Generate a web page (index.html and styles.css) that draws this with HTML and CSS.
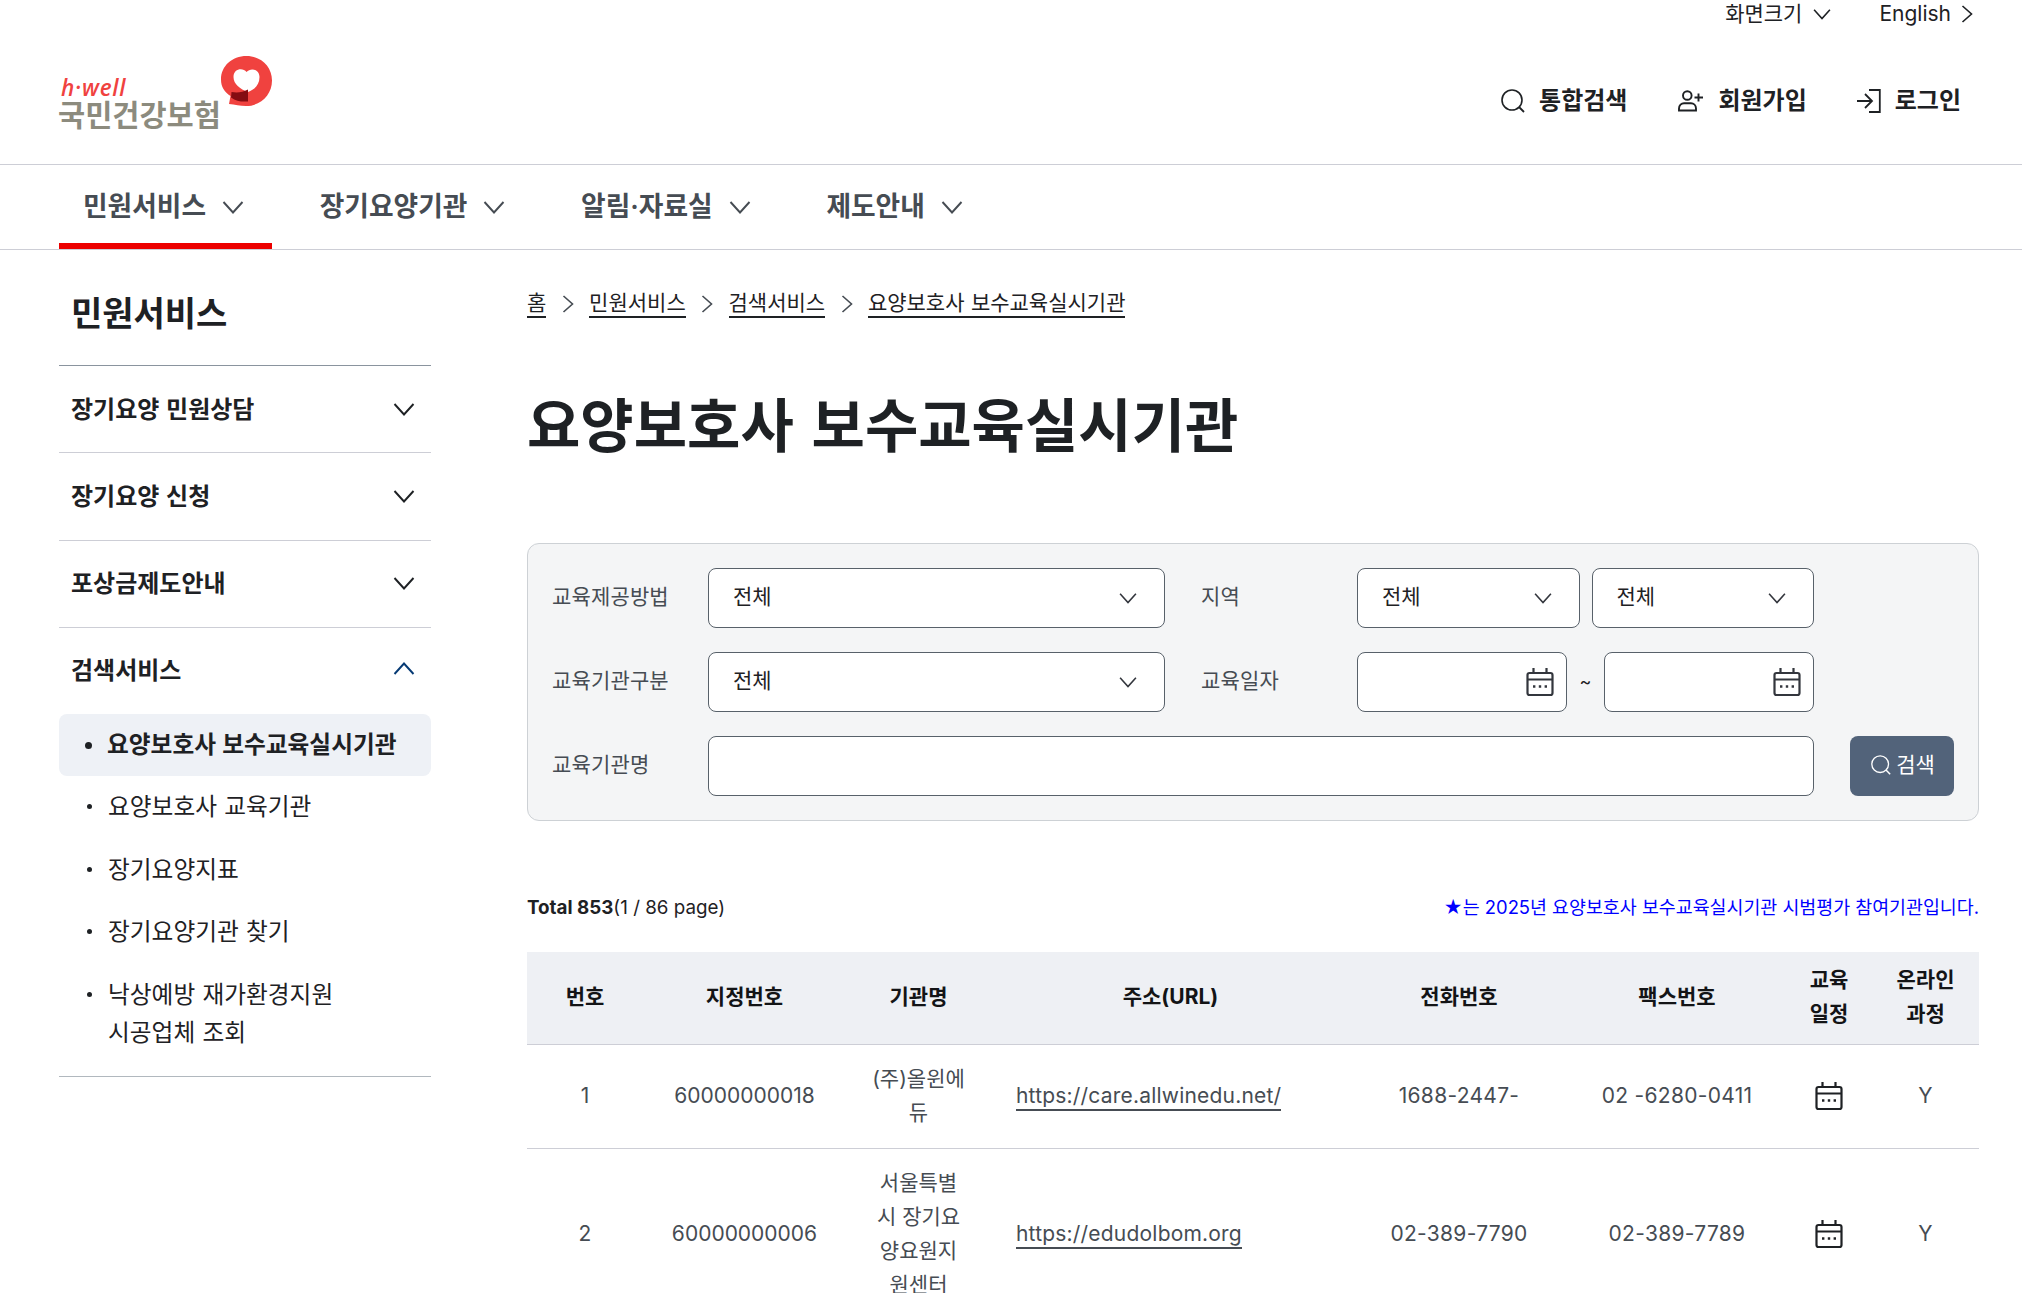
FILE: index.html
```html
<!DOCTYPE html>
<html lang="ko">
<head>
<meta charset="utf-8">
<title>요양보호사 보수교육실시기관</title>
<link rel="stylesheet" href="styles.css">
</head>
<body>
<svg width="0" height="0" class="defs" aria-hidden="true">
  <symbol id="chev" viewBox="0 0 24 24"><path d="M2.500 7 12 17.500l9.500-10.500" fill="none" stroke="currentColor" stroke-width="1.900"/></symbol>
  <symbol id="right" viewBox="0 0 12 18"><path d="M1.500 1 10.500 9l-9 8" fill="none" stroke="currentColor" stroke-width="1.600"/></symbol>
  <symbol id="search" viewBox="0 0 24 24"><circle cx="11" cy="11" r="10" fill="none" stroke="currentColor" stroke-width="1.600"/><path d="m18 18 5 5" stroke="currentColor" stroke-width="1.800"/></symbol>
  <symbol id="cal" viewBox="0 0 28 30"><g fill="none" stroke="currentColor" stroke-width="2.200"><rect x="1.500" y="6" width="25" height="22" rx="2"/><path d="M1.500 12.500h25M7.500 1v5M20.500 1v5"/></g><path d="M7 19.500h2.400M12.800 19.500h2.400M18.600 19.500h2.400" stroke="currentColor" stroke-width="2.400"/></symbol>
</svg>
<header class="header">
  <div class="util"><a>화면크기 <svg class="i-chev"><use href="#chev"/></svg></a><a>English <svg class="i-right"><use href="#right"/></svg></a></div>
  <div class="brand-row">
    <a class="logo">
      <span class="logo-text"><i>h·well</i><b>국민건강보험</b></span>
      <svg class="logo-mark" viewBox="0 0 51 51"><path fill="#f0423f" d="M25.500 0C40 0 51 10.500 51 24.500S40 50 25 50c-6 0-11-1.500-17-2l1.500-8C3.500 36 0 31 0 23.500 0 10 11 0 25.500 0z"/><path fill="#fff" d="M27 36C19 33 12.500 28 12.500 21c0-8.500 9.500-9.500 13-5 4-4.500 13-3 13 5 0 8-5 12.500-11.500 15z"/><path fill="#850c12" d="M10.500 36c5.500 1 11 .5 16.500-2.500v12c-7 .5-12-.5-17-4z"/></svg>
    </a>
    <div class="actions">
      <a><svg class="i24"><use href="#search"/></svg>통합검색</a>
      <a><svg class="i-user" viewBox="0 0 26 22"><g fill="none" stroke="currentColor" stroke-width="1.900"><circle cx="9.800" cy="5.500" r="4.300"/><path d="M1.500 20.500v-2c0-3.300 2.400-5.200 5-5.200h7c2.600 0 5 1.900 5 5.200v2zM21 3.500v8M17 7.500h8.500"/></g></svg>회원가입</a>
      <a><svg class="i24" viewBox="0 0 24 24"><path d="M0 12h15M8 5l7 7-7 7M12 1h10.800v22H12" fill="none" stroke="currentColor" stroke-width="1.800"/></svg>로그인</a>
    </div>
  </div>
</header>
<nav class="nav">
  <a class="on">민원서비스<svg class="i24"><use href="#chev"/></svg></a>
  <a>장기요양기관<svg class="i24"><use href="#chev"/></svg></a>
  <a>알림·자료실<svg class="i24"><use href="#chev"/></svg></a>
  <a>제도안내<svg class="i24"><use href="#chev"/></svg></a>
</nav>
<div class="page">
  <aside class="side">
    <h2>민원서비스</h2>
    <a class="group">장기요양 민원상담<svg class="i24"><use href="#chev"/></svg></a>
    <a class="group">장기요양 신청<svg class="i24"><use href="#chev"/></svg></a>
    <a class="group">포상금제도안내<svg class="i24"><use href="#chev"/></svg></a>
    <a class="group open">검색서비스<svg class="i24"><use href="#chev"/></svg></a>
    <ul>
      <li class="on">요양보호사 보수교육실시기관</li>
      <li>요양보호사 교육기관</li>
      <li>장기요양지표</li>
      <li>장기요양기관 찾기</li>
      <li>낙상예방 재가환경지원<br>시공업체 조회</li>
    </ul>
  </aside>
  <main class="main">
    <div class="crumbs"><a>홈</a><svg class="i-right"><use href="#right"/></svg><a>민원서비스</a><svg class="i-right"><use href="#right"/></svg><a>검색서비스</a><svg class="i-right"><use href="#right"/></svg><a>요양보호사 보수교육실시기관</a></div>
    <h1>요양보호사 보수교육실시기관</h1>
    <form class="panel">
      <label>교육제공방법</label>
      <div class="field">전체<svg class="i-sel"><use href="#chev"/></svg></div>
      <label class="second">지역</label>
      <div class="pair"><div class="field">전체<svg class="i-sel"><use href="#chev"/></svg></div><div class="field">전체<svg class="i-sel"><use href="#chev"/></svg></div></div>
      <label>교육기관구분</label>
      <div class="field">전체<svg class="i-sel"><use href="#chev"/></svg></div>
      <label class="second">교육일자</label>
      <div class="pair dates"><div class="field date"><svg class="i-cal"><use href="#cal"/></svg></div><span>~</span><div class="field date"><svg class="i-cal"><use href="#cal"/></svg></div></div>
      <label>교육기관명</label>
      <div class="field wide"></div>
      <div class="btn"><svg class="i20"><use href="#search"/></svg>검색</div>
    </form>
    <div class="summary"><span><b>Total 853</b>(1 / 86 page)</span><span class="note">★는 2025년 요양보호사 보수교육실시기관 시범평가 참여기관입니다.</span></div>
    <table>
      <colgroup><col class="c1"><col class="c2"><col class="c3"><col class="c4"><col class="c5"><col class="c5"><col class="c7"><col class="c8"></colgroup>
      <thead><tr><th>번호</th><th>지정번호</th><th>기관명</th><th>주소(URL)</th><th>전화번호</th><th>팩스번호</th><th>교육<br>일정</th><th>온라인<br>과정</th></tr></thead>
      <tbody>
        <tr><td>1</td><td>60000000018</td><td>(주)올윈에<br>듀</td><td class="url"><a>https://care.allwinedu.net/</a></td><td class="phone">1688-2447-</td><td class="phone">02 -6280-0411</td><td><svg class="i-cal"><use href="#cal"/></svg></td><td>Y</td></tr>
        <tr><td>2</td><td>60000000006</td><td>서울특별<br>시 장기요<br>양요원지<br>원센터</td><td class="url"><a>https://edudolbom.org</a></td><td class="phone">02-389-7790</td><td class="phone">02-389-7789</td><td><svg class="i-cal"><use href="#cal"/></svg></td><td>Y</td></tr>
      </tbody>
    </table>
  </main>
</div>
</body>
</html>
```
FILE: styles.css
```css
* { box-sizing: border-box; }
html { overflow: hidden; }
body { margin: 0; height: 1293px; overflow: hidden; background: #fff; color: #1e2124; font: 21px/34px Inter, "Noto Sans CJK KR", sans-serif; }
h1, h2, ul { margin: 0; padding: 0; }
svg { display: block; flex: none; }
.defs { position: absolute; }
.i24 { width: 24px; height: 24px; }
.i20 { width: 20px; height: 20px; }
.i-chev { width: 20px; height: 20px; }
.i-sel { width: 20px; height: 20px; color: #33363d; }
.i-right { width: 12px; height: 18px; }
.i-user { width: 27px; height: 22px; }
.i-cal { width: 28px; height: 30px; }

.header { height: 165px; border-bottom: 1px solid #cdced6; padding: 0 49px 0 59px; }
.util { display: flex; justify-content: flex-end; gap: 47px; height: 27px; align-items: center; }
.util a { display: flex; align-items: center; gap: 10px; }
.brand-row { display: flex; justify-content: space-between; align-items: flex-start; padding-top: 29px; }
.logo { display: flex; align-items: flex-start; }
.logo-text { display: flex; flex-direction: column; width: 162px; padding-top: 20px; }
.logo-text i { font: italic 600 22.500px/24px "Open Sans", sans-serif; color: #f0423f; padding-left: 2px; letter-spacing: .8px; }
.logo-text b { font: 600 29.500px/28px "Noto Sans CJK KR", sans-serif; color: #8c8b7e; margin: -1px 0 0 -1px; white-space: nowrap; }
.logo-mark { width: 51px; height: 51px; }
.actions { display: flex; gap: 50px; padding: 28px 12px 0 0; font-size: 24px; font-weight: 700; }
.actions a { display: flex; align-items: center; gap: 14px; }

.nav { display: flex; gap: 24px; height: 85px; padding-left: 59px; border-bottom: 1px solid #cdced6; font-size: 26.750px; font-weight: 600; color: #464c53; }
.nav a { display: flex; align-items: center; gap: 15px; padding: 0 26.700px 0 24px; border-top: 4px solid transparent; border-bottom: 6px solid transparent; }
.nav .on { border-bottom-color: #ec0000; }
.nav svg { margin-top: 2px; }

.page { display: flex; gap: 96px; padding: 0 43px 0 59px; }
.side { width: 372px; flex: none; }
.side h2 { height: 116px; padding: 41px 12px 0; font-size: 34px; line-height: 46px; border-bottom: 1px solid #8a949e; }
.group { display: flex; justify-content: space-between; align-items: center; height: 87.300px; padding: 1px 15px 0 12px; border-bottom: 1px solid #cdced6; font-size: 24px; font-weight: 600; word-spacing: .7px; }
.group svg { margin-top: -2px; }
.group.open { border: 0; height: 86px; }
.open svg { transform: rotate(180deg); margin-top: -4px; color: #063a74; }
.side ul { list-style: none; border-bottom: 1px solid #b1b8be; padding-bottom: 12px; word-spacing: .6px; }
.side li { position: relative; font-size: 23.700px; line-height: 38px; padding: 12px 0 12px 49px; margin-top: .5px; }
.side li::before { content: ""; position: absolute; left: 28px; top: 28px; width: 5px; height: 5px; border-radius: 50%; background: #1e2124; }
.side .on { margin: 0; padding: 12px 0 12px 48px; background: #eef1f6; border-radius: 8px; font-weight: 700; }
.side .on::before { left: 26px; width: 7px; height: 7px; }

.main { width: 1452px; }
.crumbs { display: flex; align-items: center; height: 107px; gap: 15.400px; }
.crumbs a { line-height: 27px; border-bottom: 2px solid #1e2124; word-spacing: .5px; }
.crumbs .i-right { color: #464c53; width: 12px; }
h1 { font-size: 58px; line-height: 76px; height: 186px; padding-top: 31px; word-spacing: 4px; }
.panel { display: grid; grid-template-columns: 156px 457px 36px 156px 457px 36px 104px; grid-template-rows: 60px 60px 60px; row-gap: 24px; padding: 24px; border: 1px solid #cdd1d5; border-radius: 12px; background: #f4f5f6; height: 278px; }
.panel label { grid-column: 1; align-self: center; padding-bottom: 2px; color: #464c53; letter-spacing: .15px; }
.panel label.second { grid-column: 4; }
.field { display: flex; align-items: center; justify-content: space-between; height: 60px; padding: 0 26px 2px 24px; background: #fff; border: 1px solid #58616a; border-radius: 8px; }
.field .i-sel { margin-top: 2px; }
.pair { display: grid; grid-template-columns: 1fr 1fr; gap: 12px; }
.dates { grid-template-columns: 210px 1fr 210px; gap: 0; text-align: center; align-items: center; }
.dates span { font-size: 18px; }
.field.date { justify-content: flex-end; padding: 0 12px; color: #33363d; }
.wide { grid-column: 2 / 6; }
.btn { grid-column: 7; display: flex; align-items: center; justify-content: center; gap: 5px; padding: 0 0 2px 2px; background: #52637a; color: #fff; border-radius: 8px; }

.summary { display: flex; justify-content: space-between; align-items: center; height: 34px; margin-top: 70px; font-size: 18.800px; }
.note { color: #00f; font-size: 18.400px; white-space: nowrap; padding-bottom: 2px; }
table { width: 1452px; table-layout: fixed; border-collapse: collapse; margin-top: 27px; color: #464c53; text-align: center; }
.c1 { width: 116px; } .c2 { width: 203px; } .c3 { width: 145px; } .c4 { width: 359px; } .c5 { width: 218px; } .c7 { width: 86px; } .c8 { width: 107px; }
th { padding: 11px 0 12px; background: #eef0f4; color: #131416; height: 92px; font-weight: 700; }
td { padding: 17px 0 18px; }
tr { border-bottom: 1px solid #cdced6; }
td .i-cal { margin: 0 auto; color: #1e2124; }
.phone { letter-spacing: .3px; }
.url { text-align: left; padding-left: 25px; letter-spacing: .2px; }
.url a { display: inline-block; line-height: 27px; border-bottom: 2px solid #464c53; }
```
